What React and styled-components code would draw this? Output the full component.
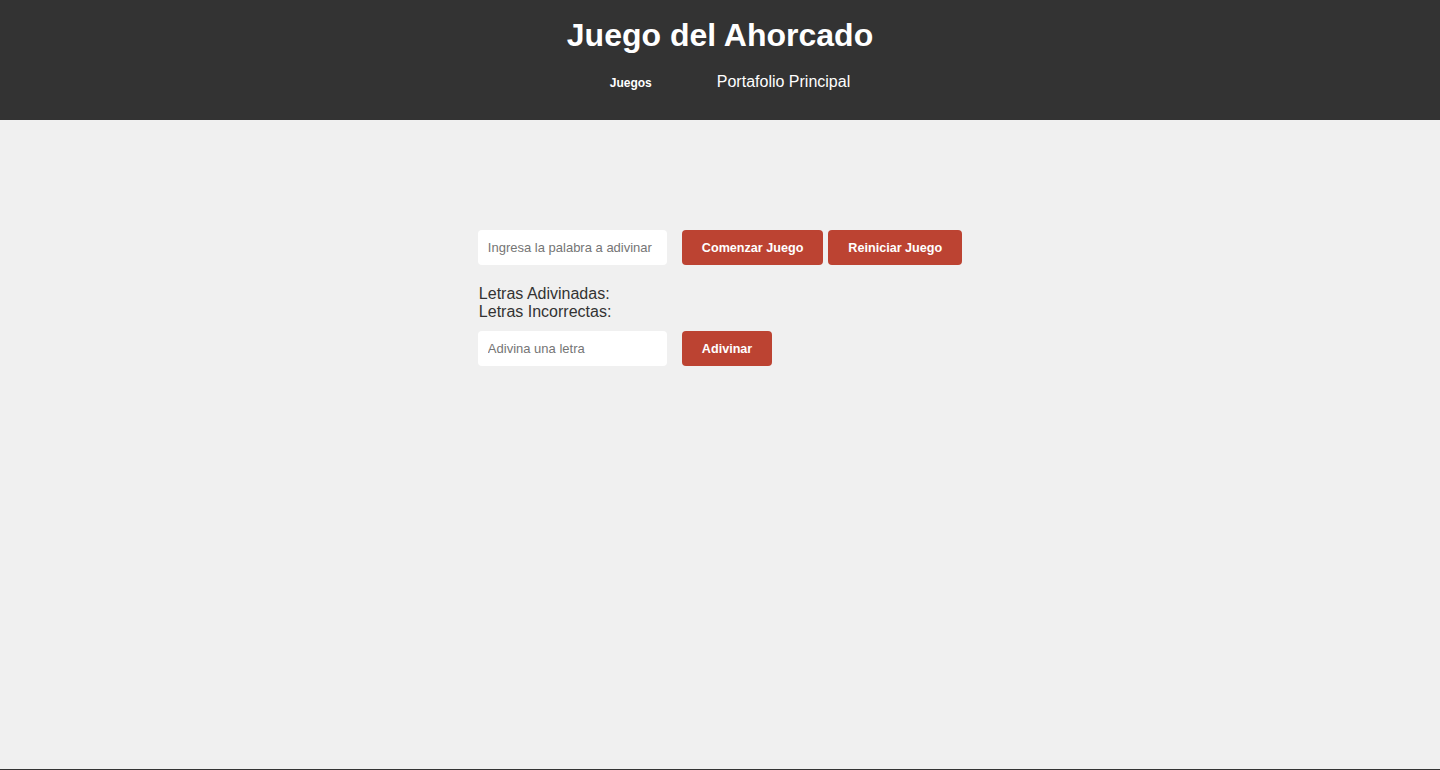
import React, { useState } from 'react'
import styled, { createGlobalStyle } from 'styled-components'

const GlobalStyle = createGlobalStyle`
  body {
    margin: 0;
    background-color: #f0f0f0;
    font-family: 'Liberation Sans', Arial, sans-serif;
    color: #333;
  }
`

const Header = styled.header`
  height: 120px;
  background-color: #333;
  color: #fff;
  display: flex;
  flex-direction: column;
  align-items: center;
  box-sizing: border-box;
  padding-top: 17px;
`

const Title = styled.h1`
  margin: 0;
  font-size: 32px;
  font-weight: 700;
  line-height: 37px;
`

const Nav = styled.nav`
  display: flex;
  align-items: center;
  gap: 65px;
  margin-top: 19px;
  padding-left: 20px;
`

const NavLink = styled.a`
  color: #fff;
  text-decoration: none;
  cursor: pointer;
  font-size: ${p => (p.$small ? '12px' : '16px')};
  font-weight: ${p => (p.$small ? 700 : 400)};
  margin-top: ${p => (p.$small ? '2px' : '0')};
`

const Main = styled.main`
  height: 649px;
  display: flex;
  justify-content: center;
  padding-top: 110px;
  box-sizing: border-box;
`

const Game = styled.div`
  display: flex;
  flex-direction: column;
`

const Row = styled.div`
  display: flex;
  align-items: center;
  gap: 5px;
`

const Input = styled.input`
  width: 189px;
  height: 35px;
  box-sizing: border-box;
  border: none;
  border-radius: 4px;
  padding: 0 10px;
  margin-right: 10px;
  background: #fff;
  font-family: 'Liberation Sans', Arial, sans-serif;
  font-size: 13px;
  color: #333;
  outline: none;
  &::placeholder {
    color: #757575;
  }
`

const Button = styled.button`
  height: 35px;
  padding: 0 20px;
  border: none;
  border-radius: 4px;
  background-color: #bc4332;
  color: #fff;
  font-family: 'Liberation Sans', Arial, sans-serif;
  font-size: 12.6px;
  font-weight: 700;
  cursor: pointer;
  &:hover {
    background-color: #a5382a;
  }
`

const Info = styled.div`
  margin: 20px 0 10px 1px;
  font-size: 16px;
  line-height: 18px;
  color: #333;
`

const Footer = styled.footer`
  height: 20px;
  background-color: #333;
`

const App = () => {
  const [word, setWord] = useState('')
  const [letter, setLetter] = useState('')

  return (
    <>
      <GlobalStyle />
      <Header>
        <Title>Juego del Ahorcado</Title>
        <Nav>
          <NavLink $small>Juegos</NavLink>
          <NavLink>Portafolio Principal</NavLink>
        </Nav>
      </Header>
      <Main>
        <Game>
          <Row>
            <Input
              placeholder="Ingresa la palabra a adivinar"
              value={word}
              onChange={e => setWord(e.target.value)}
            />
            <Button>Comenzar Juego</Button>
            <Button>Reiniciar Juego</Button>
          </Row>
          <Info>
            <div>Letras Adivinadas:</div>
            <div>Letras Incorrectas:</div>
          </Info>
          <Row>
            <Input
              placeholder="Adivina una letra"
              maxLength={1}
              value={letter}
              onChange={e => setLetter(e.target.value)}
            />
            <Button>Adivinar</Button>
          </Row>
        </Game>
      </Main>
      <Footer />
    </>
  )
}

export default App
